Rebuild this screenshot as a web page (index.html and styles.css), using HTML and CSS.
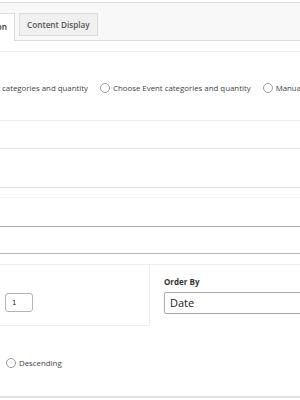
FILE: index.html
```html
<!DOCTYPE html>
<html>
<head>
<meta charset="utf-8">
<link rel="stylesheet" href="styles.css">
</head>
<body>
<div class="panel">
  <div class="tabs">
    <div class="tab active">Configuration</div>
    <div class="tab">Content Display</div>
  </div>
  <div class="row r0"></div>
  <div class="row r1">
    <div class="radios">
      <label class="opt first"><span class="txt">Choose Post categories and quantity</span></label>
      <label class="opt"><span class="radio"></span><span class="txt">Choose Event categories and quantity</span></label>
      <label class="opt"><span class="radio"></span><span class="txt">Manual selection</span></label>
    </div>
  </div>
  <div class="row r2"></div>
  <div class="row r3"></div>
  <div class="row r4"></div>
  <div class="row r5"></div>
  <div class="row r6"></div>
  <div class="row r7"></div>
  <div class="cols">
    <div class="box">
      <input class="num" type="text" value="1">
    </div>
    <div class="order">
      <div class="lbl">Order By</div>
      <div class="select">Date</div>
    </div>
  </div>
  <div class="dir">
    <label class="opt"><span class="radio"></span><span class="txt">Descending</span></label>
  </div>
  <div class="footer"></div>
</div>
</body>
</html>
```
FILE: styles.css
```css
html, body {
  margin: 0;
  padding: 0;
  background: #fff;
}
body {
  width: 300px;
  height: 400px;
  overflow: hidden;
  font-family: "Open Sans", "Noto Sans", sans-serif;
  color: #444;
}
.panel {
  margin-top: 2px;
  border-top: 1px solid #dcdcdc;
}
.tabs {
  display: flex;
  align-items: flex-start;
  gap: 4px;
  height: 38px;
  padding-top: 10px;
  box-sizing: border-box;
  background: #f8f8f8;
  border-bottom: 1px solid #dcdcdc;
  margin-left: -70px;
}
.tab {
  box-sizing: border-box;
  height: 23px;
  padding: 0 7px;
  font-size: 8.2px;
  font-weight: 600;
  line-height: 21px;
  color: #555;
  background: #f0f0f0;
  border: 1px solid #dcdcdc;
  white-space: nowrap;
}
.tab.active {
  width: 85px;
  height: 28px;
  background: #fff;
  color: #333;
  border-bottom: none;
  line-height: 26px;
  text-align: right;
  overflow: hidden;
}
.row {
  border-bottom: 1px solid #eee;
}
.r0 { height: 10px; }
.r1 {
  height: 69px;
  display: flex;
  align-items: center;
  padding-top: 4px;
  box-sizing: border-box;
  border-bottom-color: #efefef;
}
.r2 { height: 27px; border-bottom-color: #e2e2e2; }
.r3 { height: 38px; border-bottom-color: #dedede; }
.r4 { height: 9px; border-bottom-color: #f4f4f4; }
.r5 { height: 28px; border-bottom-color: #ababab; }
.r6 { height: 26px; border-bottom-color: #b3b8be; }
.r7 { height: 10px; border-bottom-color: #eeeeee; }
.radios {
  display: flex;
  align-items: center;
  gap: 12px;
  white-space: nowrap;
  margin-left: -62px;
}
.opt {
  display: flex;
  align-items: center;
  gap: 3px;
  font-size: 7.85px;
  color: #444;
}
.opt.first {
  width: 150px;
  justify-content: flex-end;
  overflow: hidden;
}
.radio {
  width: 8px;
  height: 8px;
  border: 1px solid #9a9a9a;
  border-radius: 50%;
  background: #fff;
  flex: none;
}
.cols {
  display: flex;
  height: 61px;
}
.box {
  flex: none;
  width: 150px;
  box-sizing: border-box;
  border-right: 1px solid #eee;
  border-bottom: 1px solid #eee;
  display: flex;
  align-items: flex-end;
  padding: 0 0 13px 5px;
}
.num {
  width: 28px;
  height: 19px;
  box-sizing: border-box;
  border: 1px solid #b4b4b4;
  border-radius: 3px;
  font-family: "DejaVu Sans Mono", monospace;
  font-size: 7px;
  padding: 0 0 0 6px;
  color: #222;
  margin: 0;
}
.order {
  padding: 11px 0 0 14px;
  flex: 1;
  min-width: 0;
  overflow: hidden;
}
.lbl {
  font-size: 8px;
  font-weight: 700;
  color: #333;
  height: 11px;
  line-height: 11px;
  margin-bottom: 5px;
}
.select {
  box-sizing: border-box;
  height: 22px;
  width: 200px;
  border: 1px solid #aaaaaa;
  border-radius: 2px;
  font-size: 11px;
  line-height: 20px;
  padding-left: 5px;
  color: #222;
}
.dir {
  display: flex;
  align-items: center;
  height: 24px;
  margin-top: 25px;
  padding-left: 6px;
}
.footer {
  margin-top: 21px;
  border-bottom: 2px solid #e2e2e2;
}
```
